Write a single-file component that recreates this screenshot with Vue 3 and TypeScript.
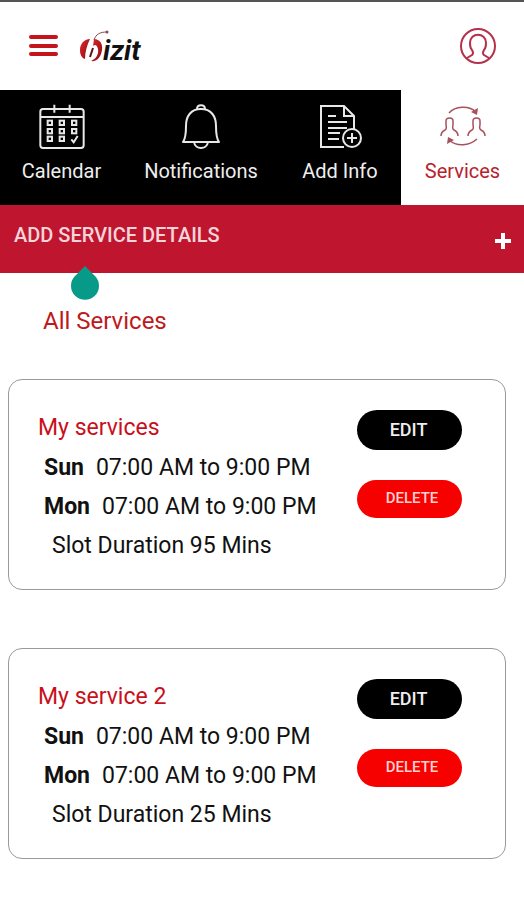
<script setup lang="ts">
interface Slot {
  day: string
  hours: string
}

interface Service {
  name: string
  slots: Slot[]
  duration: number
}

const slots: Slot[] = [
  { day: 'Sun', hours: '07:00 AM to 9:00 PM' },
  { day: 'Mon', hours: '07:00 AM to 9:00 PM' },
]

const services: Service[] = [
  { name: 'My services', slots, duration: 95 },
  { name: 'My service 2', slots, duration: 25 },
]

const dateRows = [50, 75, 98]
</script>

<template>
  <div class="app">
    <header class="header">
      <button class="icon-button" type="button" aria-label="Menu">
        <svg width="30" height="24" viewBox="0 0 30 24">
          <path d="M3 3H28M3 12H28M3 20H28" stroke="#c4141c" stroke-width="4" stroke-linecap="round" />
        </svg>
      </button>
      <a class="logo" href="#">
        <svg width="23" height="34" viewBox="0 0 23 34" aria-hidden="true">
          <defs>
            <linearGradient id="ball" x1="0" y1="0" x2="1" y2="1">
              <stop offset="0" stop-color="#e0262c" />
              <stop offset="1" stop-color="#8c0c14" />
            </linearGradient>
          </defs>
          <path d="M10 10C4 10 0 15 0 21C0 26 2 29 5 30C5 23 7 16 10 10Z" fill="url(#ball)" />
          <path d="M14 10C20 10 23 15 22 21C21 28 17 33 11 32C16 30 19 25 18 20C17 16 15 15 13 17Z" fill="url(#ball)" />
          <path d="M13 19L10 28" stroke="#5e0f16" stroke-width="2" fill="none" />
          <path d="M14 11C16 5 20 3 27 3" stroke="#8a4a4e" stroke-width="1" fill="none" />
          <circle cx="27" cy="3" r="1.5" fill="#8a4a4e" />
        </svg>
        <span class="logo-text">izit</span>
      </a>
      <button class="icon-button profile" type="button" aria-label="Profile">
        <svg width="38" height="38" viewBox="0 0 38 38" fill="none" stroke="#b5304a" stroke-width="2">
          <circle cx="19" cy="19" r="17" />
          <path d="M8 31L13 28Q15 26 13 23Q11 21 11 16C11 5 27 5 27 16Q27 21 25 23Q23 26 25 28L30 31" />
        </svg>
      </button>
    </header>

    <nav class="tabs">
      <a class="tab" href="#">
        <svg class="tab-icon" viewBox="0 0 138 138" fill="none" stroke="#e8e8e8" stroke-width="6">
          <rect x="4" y="15" width="130" height="117" rx="8" />
          <path d="M4 39H134M46 2V26M92 2V26" />
          <template v-for="y in dateRows" :key="y">
            <rect x="26" :y="y" width="13" height="13" />
            <rect x="62" :y="y" width="13" height="13" />
            <rect v-if="y !== 98" x="99" :y="y" width="13" height="13" />
          </template>
          <path d="M97 106L104 115L116 96" />
        </svg>
        <span>Calendar</span>
      </a>
      <a class="tab" href="#">
        <svg class="tab-icon" viewBox="0 0 46 46" fill="none" stroke="#e8e8e8" stroke-width="2" stroke-linejoin="round">
          <path d="M5 38C8 34 8 28 8 22C8 12 13 5 23 5S38 12 38 22C38 28 38 34 41 38Z" />
          <path d="M19 5C19 0 27 0 27 5M16 38C17 46 29 46 30 38" />
        </svg>
        <span>Notifications</span>
      </a>
      <a class="tab" href="#">
        <svg class="tab-icon" viewBox="0 0 46 46" fill="none" stroke="#e8e8e8" stroke-width="2">
          <path d="M27 43H4V2H27L37 12V26M27 2V12H37M11 12H19M11 18H30M11 24H30M11 29H23M11 35H22" />
          <circle cx="35" cy="34" r="9" />
          <path d="M35 29V39M30 34H40" />
        </svg>
        <span>Add Info</span>
      </a>
      <a class="tab active" href="#" aria-current="page">
        <svg class="tab-icon" viewBox="0 0 46 46" fill="none" stroke="#a8505c" stroke-width="1.5">
          <path d="M9 9C15 2 29 1 36 8M37 35C29 42 17 43 9 36" />
          <path d="M38 4L37 11L31 8ZM7 40L8 33L14 36Z" fill="#a8505c" stroke="none" />
          <path d="M1 32Q1 28 5 26Q7 25 6 21V17C6 13 13 13 13 17V21Q12 25 14 26Q18 28 18 32" />
          <path d="M28 32Q28 28 32 26Q34 25 33 21V17C33 13 40 13 40 17V21Q39 25 41 26Q45 28 45 32" />
        </svg>
        <span>Services</span>
      </a>
    </nav>

    <button class="add-bar" type="button">
      <span class="add-label">ADD SERVICE DETAILS</span>
      <svg width="16" height="18" viewBox="0 0 16 18" aria-hidden="true">
        <path d="M8 1V17M0 9H16" stroke="#fff" stroke-width="4" />
      </svg>
      <svg class="handle" width="30" height="36" viewBox="0 0 30 36" aria-hidden="true">
        <path d="M15 1L25 11A14 14 0 1 1 5 11Z" fill="#089a88" />
      </svg>
    </button>

    <main class="content">
      <h1 class="heading">All Services</h1>
      <div class="cards">
        <article v-for="service in services" :key="service.name" class="card">
          <div class="details">
            <h2 class="name">{{ service.name }}</h2>
            <p v-for="slot in service.slots" :key="slot.day" class="slot">
              <strong>{{ slot.day }}</strong>
              <span>{{ slot.hours }}</span>
            </p>
            <p class="duration">Slot Duration {{ service.duration }} Mins</p>
          </div>
          <div class="actions">
            <button class="edit" type="button">EDIT</button>
            <button class="delete" type="button">DELETE</button>
          </div>
        </article>
      </div>
    </main>
  </div>
</template>

<style>
body {
  background: #fff;
}
</style>

<style scoped>
.app {
  border-top: 2px solid #565454;
  font-family: Roboto, "Liberation Sans", sans-serif;
  color: #111;
}

button {
  border: 0;
  font-family: inherit;
  cursor: pointer;
}

a {
  text-decoration: none;
}

svg {
  display: block;
  overflow: visible;
}

.header {
  display: flex;
  align-items: center;
  height: 88px;
  padding: 0 27px 0 28px;
  box-sizing: border-box;
}

.icon-button {
  padding: 0;
  background: none;
}

.logo {
  display: flex;
  align-items: center;
  margin-left: 22px;
  color: #111;
}

.logo-text {
  padding-top: 10px;
  font-family: "Liberation Sans Narrow", Roboto, sans-serif;
  font-size: 28px;
  line-height: 32px;
  font-weight: 700;
  font-style: italic;
}

.profile {
  margin-left: auto;
}

.tabs {
  display: grid;
  grid-template-columns: 123fr 156fr 122fr 123fr;
  background: #000;
}

.tab {
  display: flex;
  flex-direction: column;
  align-items: center;
  gap: 8px;
  padding: 14px 0 21px;
  color: #eee;
  font-size: 20px;
  line-height: 26px;
}

.tab.active {
  background: #fff;
  color: #b8222c;
}

.tab-icon {
  width: 46px;
  height: 46px;
}

.add-bar {
  position: relative;
  display: flex;
  align-items: center;
  justify-content: space-between;
  width: 100%;
  height: 68px;
  padding: 4px 13px 0 14px;
  background: #bf152f;
  color: #f6d5da;
  font-size: 20px;
  font-weight: 500;
}

.add-label {
  padding-bottom: 12px;
}

.handle {
  position: absolute;
  left: 70px;
  top: 60px;
}

.content {
  padding: 32px 18px 32px 8px;
}

.heading {
  margin: 0 0 42px 35px;
  color: #bd1a20;
  font-size: 24px;
  line-height: 32px;
  font-weight: 400;
}

.cards {
  display: flex;
  flex-direction: column;
  gap: 58px;
}

.card {
  display: flex;
  justify-content: space-between;
  padding: 28px 43px 23px 29px;
  border: 1px solid #999;
  border-radius: 14px;
  font-size: 23px;
  line-height: 39px;
}

.name {
  margin: 0;
  color: #c8101c;
  font-size: 23px;
  line-height: 40px;
  font-weight: 400;
}

.slot {
  display: flex;
  gap: 12px;
  margin: 0 0 0 6px;
}

.duration {
  margin: 0 0 0 14px;
  line-height: 40px;
}

.actions {
  display: flex;
  flex-direction: column;
  gap: 30px;
  padding-top: 2px;
}

.edit,
.delete {
  width: 105px;
  height: 40px;
  padding: 0 2px 2px 0;
  border-radius: 20px;
  background: #000;
  color: #eee;
  font-size: 18px;
  font-weight: 500;
}

.delete {
  height: 38px;
  padding: 0 0 2px 5px;
  background: #f70000;
  color: #ffd0d0;
  font-size: 15px;
}
</style>
